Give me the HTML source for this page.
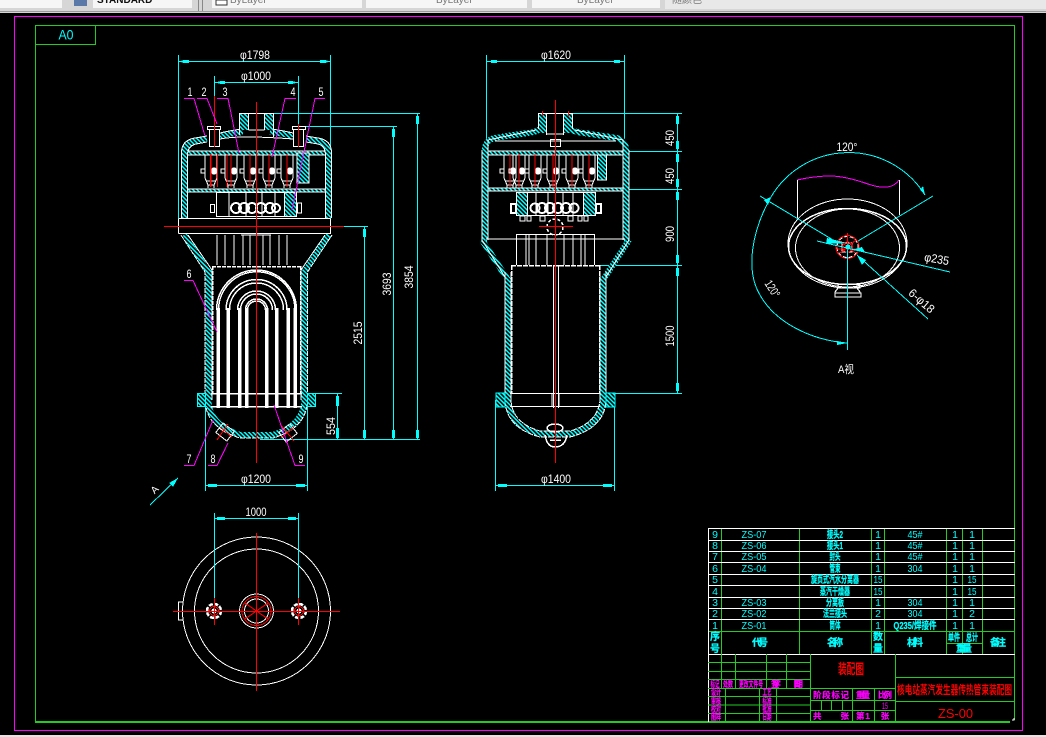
<!DOCTYPE html>
<html><head><meta charset="utf-8"><style>
html,body{margin:0;padding:0;background:#000;width:1046px;height:737px;overflow:hidden}
svg{display:block}
text{font-family:"Liberation Sans","Noto Sans CJK SC",sans-serif}
.w{fill:#fff;font-size:12px;text-anchor:middle}
.c{fill:#0ff;font-size:10.5px;text-anchor:middle}
.cb{fill:#0ff;stroke:#0ff;stroke-width:.25;font-size:10px;font-weight:bold;text-anchor:middle}
.m{fill:#f0f;stroke:#f0f;stroke-width:.2;font-size:8.5px;font-weight:bold;text-anchor:middle}
.r{fill:#f00;text-anchor:middle;font-weight:bold}
</style></head><body>
<svg width="1046" height="737" viewBox="0 0 1046 737" xmlns="http://www.w3.org/2000/svg" shape-rendering="crispEdges">
<defs>
<pattern id="h" width="3" height="3" patternUnits="userSpaceOnUse" patternTransform="rotate(45)"><rect width="3" height="3" fill="#000"/><rect width="3" height="1.3" fill="#0ff"/></pattern>
<g id="sep" fill="none" stroke="#fff" stroke-width="1">
<path d="M-6,155H6V178L3,185H-3L-6,178Z"/><path d="M-3,185V188M3,185V188M-5,181H5"/><circle cx="3" cy="171" r="3" fill="#fff"/><rect x="-10" y="169" width="4" height="4"/>
<path d="M0,154V187" stroke="#f00" stroke-width="1.2"/>
</g>
<g id="hole"><circle r="7" fill="none" stroke="#fff" stroke-width="2.5" stroke-dasharray="4 1.5"/><circle r="4.5" fill="none" stroke="#f00"/><circle r="2.5" fill="#fff"/></g>
</defs>
<rect width="1046" height="737" fill="#000"/>
<!-- toolbar -->
<rect width="1046" height="13" fill="#d6d6d6"/>
<rect y="11" width="1046" height="1" fill="#9a9a9a"/>
<g fill="#f6f6f6"><rect width="62" height="8"/><rect x="93" width="99" height="8"/><rect x="212" width="150" height="8"/><rect x="366" width="161" height="8"/><rect x="532" width="128" height="8"/><rect x="665" width="381" height="9" fill="#e8e8e8"/></g>
<rect x="74" y="0" width="13" height="6" fill="#5a78a8"/>
<rect x="198" y="0" width="1" height="11" fill="#888"/><rect x="202" y="0" width="1" height="11" fill="#888"/>
<rect x="216" y="0" width="11" height="5" fill="#fff" stroke="#333"/>
<g font-size="10" fill="#777"><text x="230" y="3">ByLayer</text><text x="436" y="3">ByLayer</text><text x="577" y="3">ByLayer</text><text x="672" y="3">随颜色</text></g>
<text x="97" y="3" font-size="10" font-weight="bold" fill="#111">STANDARD</text>
<rect y="735" width="1046" height="2" fill="#e4e4e4"/>
<rect x="14.5" y="16.5" width="1008" height="714" fill="none" stroke="#f0f"/>
<path d="M35.5,25.5H1014.5V720M35.5,25.5V722" fill="none" stroke="#2c2" stroke-width="1"/>
<rect x="35" y="721" width="975" height="2" fill="#2c2"/>
<rect x="35.5" y="25.5" width="60" height="19" fill="none" stroke="#2c2"/>
<text x="66" y="39.5" font-size="14" fill="#0ff" text-anchor="middle" textLength="15" lengthAdjust="spacingAndGlyphs">A0</text>

<!-- LEFT VIEW -->
<g fill="none">
<path d="M178.5,55V219M330.5,55V219M214.5,76V128M298.5,76V128M205.5,406V491M307.5,406V491" stroke="#0ff"/>
<path d="M179,61.5H330M215,82.5H298M206,485.5H307" stroke="#0ff"/>
<path d="M272,113.5H420M306,126.5H397M344,226.5H368M315,393.5H342M260,439.5H420M417.5,113V440M393.5,126V440M364.5,226V440M337.5,393V440" stroke="#0ff"/>
<path d="M150,505L178,478" stroke="#0ff"/>
<!-- hatched walls -->
<g stroke="url(#h)" stroke-width="6">
<path d="M184.5,218V153Q184.5,143 195,141L207,139M220,136Q232,133 243,132"/>
<path d="M328.5,218V153Q328.5,143 318,141L306,139M293,136Q281,133 270,132"/>
<path d="M184,235L208.5,272V400Q209,425 240,435H273Q304,425 304.5,400V272L329,235"/>
<path d="M188,153H325M188,190.5H325" stroke-width="4"/>
</g>
<g stroke="#fff">
<path d="M181.5,218V153Q181.5,140 195,138L207,136M220,133Q232,130 243,129M331.5,218V153Q331.5,140 318,138L306,136M293,133Q281,130 270,129"/>
<path d="M187.5,218V155Q187.5,146 196,144L207,142M220,139Q240,135 293,139M325.5,218V155Q325.5,146 318,144L306,142"/>
<path d="M178.5,218.5H330.5M178.5,233.5H330.5V219M178.5,219V233.5"/>
<path d="M188,151H325M188,155H325M188,189H325M188,192H325"/>
<path d="M181,235L205,272V400Q206,428 240,438H273Q307,428 307.5,400V272L332,235" stroke-dasharray="5 1"/>
<path d="M188,235L212,270V400M325,235L301,270V400"/>
<path d="M239.5,113.5H273.5V137M239.5,113V135M248.5,113V130M264.5,113V130M248.5,130H264.5"/>
<rect x="207.5" y="126.5" width="13" height="3"/><rect x="209.5" y="129.5" width="10" height="17"/>
<rect x="292.5" y="126.5" width="13" height="3"/><rect x="293.5" y="129.5" width="10" height="17"/>
</g>
<rect x="240" y="114" width="8" height="16" fill="url(#h)"/><rect x="265" y="114" width="8" height="16" fill="url(#h)"/>
<rect x="297" y="153" width="12" height="30" fill="url(#h)" stroke="#fff"/>
<rect x="284.5" y="192.5" width="12" height="24" fill="url(#h)" stroke="#fff"/>
<rect x="197.5" y="393.5" width="8" height="13" fill="url(#h)" stroke="#0ff"/><rect x="307.5" y="393.5" width="8" height="13" fill="url(#h)" stroke="#0ff"/>
</g>
<use href="#sep" x="211"/><use href="#sep" x="231"/><use href="#sep" x="250"/><use href="#sep" x="269"/><use href="#sep" x="287"/>
<path d="M217.5,154V187" stroke="#f00" fill="none"/>
<g fill="none" stroke="#fff">
<rect x="216.5" y="192.5" width="68" height="24"/>
<path d="M229,192V216M246,192V216M262,192V216M275,192V216"/>
<g stroke-width="2"><circle cx="236" cy="208" r="5"/><circle cx="244" cy="208" r="5"/><circle cx="252" cy="208" r="5"/><circle cx="261" cy="208" r="5"/><circle cx="270" cy="208" r="5"/><circle cx="276" cy="208" r="4"/></g>
<rect x="210.5" y="204.5" width="4" height="8"/><rect x="297.5" y="203" width="4" height="10"/>
<path d="M217,235V265M225,235V265M234,235V265M243,235V265M250,235V265M263,235V265M270,235V265M279,235V265M287,235V265M241,235H271"/>
<path d="M212,266.5H301M212.5,266V393M300.5,266V393" stroke-width="1.5" stroke-dasharray="4 1"/>
<g stroke-width="1.5">
<path d="M218.5,310A38,38 0 0 1 295,310"/><path d="M216.5,310A40,40 0 0 1 296.5,310" />
<path d="M226,310A30.5,30.5 0 0 1 287,310"/><path d="M229.5,310A27,27 0 0 1 283.5,310"/>
<path d="M237.5,310A19,19 0 0 1 275.5,310"/><path d="M240.5,310A16,16 0 0 1 272.5,310"/>
<path d="M245.5,310A11,11 0 0 1 267.5,310"/><path d="M247.5,310A9,9 0 0 1 265.5,310"/>
<path d="M211,393.5H302M211,406.5H302"/>
</g>
<path d="M218.4,408V308M228,408V308M239.7,408V308M246.7,408V308M266.7,408V308M276.7,408V308M288.3,408V308M295,408V308" stroke-width="3.5"/>
<rect x="-7" y="-6" width="14" height="12" transform="translate(225 432) rotate(38)"/>
<rect x="-7" y="-6" width="14" height="12" transform="translate(288 433) rotate(-38)"/>
<path d="M217,440L228,424M280,424L294,441M220,427L232,437M281,438L294,427" stroke="#f00"/>
</g>
<path d="M256.5,102V463M164,226.5H344" stroke="#f00" stroke-width="1.2" fill="none"/>
<path d="M214.5,96V147M298.5,124V147M210.5,154V187M227,154V187" stroke="#f00" fill="none"/>
<path d="M184,98.5H194L205,136M197,98.5H207L217,124M217,98.5H228L239,153M296,98.5H285L272,157M325,98.5H315L292,210M184,280.5H193L217,332M184,465.5H194L213,420M208,465.5H217L228,443M305,465.5H295L274,405M797,180Q815,176 830,176T868,184T899,180" stroke="#f0f" fill="none"/>
<g>
<text class="w" x="190" y="96" textLength="5" lengthAdjust="spacingAndGlyphs">1</text><text class="w" x="204" y="96" textLength="5" lengthAdjust="spacingAndGlyphs">2</text><text class="w" x="225" y="96" textLength="5" lengthAdjust="spacingAndGlyphs">3</text><text class="w" x="293" y="96" textLength="5" lengthAdjust="spacingAndGlyphs">4</text><text class="w" x="321" y="96" textLength="5" lengthAdjust="spacingAndGlyphs">5</text>
<text class="w" x="189" y="278" textLength="5" lengthAdjust="spacingAndGlyphs">6</text><text class="w" x="189" y="463" textLength="5" lengthAdjust="spacingAndGlyphs">7</text><text class="w" x="213" y="463" textLength="5" lengthAdjust="spacingAndGlyphs">8</text><text class="w" x="301" y="463" textLength="5" lengthAdjust="spacingAndGlyphs">9</text>
<text class="w" x="255" y="59" textLength="30" lengthAdjust="spacingAndGlyphs">φ1798</text>
<text class="w" x="256" y="80" textLength="30" lengthAdjust="spacingAndGlyphs">φ1000</text>
<text class="w" x="256" y="483" textLength="30" lengthAdjust="spacingAndGlyphs">φ1200</text>
<text class="w" transform="translate(335,426) rotate(-90)" textLength="18" lengthAdjust="spacingAndGlyphs">554</text>
<text class="w" transform="translate(362,333) rotate(-90)" textLength="23" lengthAdjust="spacingAndGlyphs">2515</text>
<text class="w" transform="translate(391,284) rotate(-90)" textLength="23" lengthAdjust="spacingAndGlyphs">3693</text>
<text class="w" transform="translate(413,277) rotate(-90)" textLength="23" lengthAdjust="spacingAndGlyphs">3854</text>
<text class="w" transform="translate(157,492) rotate(-45)" style="font-size:10px">A</text>
</g>
<g fill="#0ff">
<rect x="183" y="60" width="6" height="3"/><rect x="320" y="60" width="6" height="3"/><path d="M179,61.5L184,60V63Z M330,61.5L325,60V63Z"/>
<rect x="220" y="81" width="5" height="3"/><rect x="288" y="81" width="5" height="3"/><path d="M215,82.5L221,81V84ZM298,82.5L292,81V84Z"/>
<rect x="208" y="484" width="9" height="3"/><rect x="296" y="484" width="9" height="3"/>
<rect x="336" y="396" width="3" height="10"/><rect x="336" y="428" width="3" height="10"/>
<rect x="363" y="229" width="3" height="8"/><rect x="363" y="430" width="3" height="8"/>
<rect x="392" y="129" width="3" height="8"/><rect x="392" y="430" width="3" height="8"/>
<rect x="416" y="116" width="3" height="8"/><rect x="416" y="430" width="3" height="8"/>
<path d="M178,478L169,483L173,487Z"/>
</g>

<!-- CENTER VIEW -->
<g fill="none">
<path d="M486.5,55V242M624.5,55V242M495.5,400V491M614.5,400V491" stroke="#0ff"/>
<path d="M487,61.5H624M496,485.5H614" stroke="#0ff"/>
<path d="M572,113.5H682M628,151.5H682M628,189.5H682M600,265.5H682M615,393.5H682M677.5,113V394" stroke="#0ff"/>
<g stroke="url(#h)" stroke-width="6">
<path d="M485,240V150Q485,141 494,138L534,132Q541,130 544,124"/>
<path d="M626,240V150Q626,141 617,138L577,132Q570,130 567,124"/>
<path d="M482,240L508,280V400Q509,425 540,434H570Q602,425 603,400V280L629,240"/>
<path d="M488,153H623M488,189.5H623" stroke-width="4"/>
</g>
<rect x="538" y="114" width="8" height="19" fill="url(#h)"/><rect x="564" y="114" width="8" height="19" fill="url(#h)"/>
<g stroke="#fff">
<path d="M538.5,113.5H572.5M546.5,113V135M563.5,113V135M538.5,113V129M572.5,113V129"/>
<path d="M488,150V140L536,130M623,150V140L575,130M495,141H616M546,134H564"/>
<rect x="550.5" y="139.5" width="10" height="7"/>
<path d="M488,151H623M488,155H623M488,188H623M488,191H623"/>
<path d="M482,240V150M488,240V150M629,240V150M623,240V150M486,239H625M505,272V400M511,272V400M600,272V400M606,272V400"/>
<path d="M482,240L505,277M629,240L606,277"/>
<path d="M505,400Q506,428 540,437H570Q605,428 606,400M511,400Q512,423 540,431H570Q598,423 600,400" stroke-dasharray="6 1"/>
<path d="M516.5,234.5H594.5M516.5,234V265M594.5,234V265M526,234V265M529,234V265M536,234V265M547,234V265M564,234V265M573,234V265M581,234V265M585,234V265"/>
<path d="M511,265.5H600M511.5,265V393M599.5,265V393" stroke-width="1.5" stroke-dasharray="5 1"/>
<path d="M553.5,265V408M558.5,265V408M510,393.5H600M510,406.5H600M552,393V407M559,393V407" stroke-width="1"/>
<path d="M545,435Q547,447 555,447Q565,447 567,435M550,440H561" stroke-width="1.5"/>
<ellipse cx="555" cy="428" rx="8" ry="4" stroke-width="1.5"/>
<rect x="516.5" y="192.5" width="79" height="23"/>
<path d="M536,192V215M548,192V215M563,192V215M573,192V215"/>
<g stroke-width="2"><circle cx="535" cy="208" r="4.5"/><circle cx="542" cy="208" r="5"/><circle cx="550" cy="208" r="5"/><circle cx="558" cy="208" r="5"/><circle cx="566" cy="208" r="5"/><circle cx="574" cy="208" r="4.5"/></g>
<rect x="511" y="204" width="5" height="9" stroke-width="2"/><rect x="596" y="204" width="5" height="9" stroke-width="2"/>
<path d="M520,216h5v5h-5zM527,216h4v5h-4zM540,216h5v5h-5zM568,216h5v5h-5zM578,216h4v5h-4zM584,216h4v5h-4z"/>
<rect x="597.5" y="155" width="9" height="25" fill="url(#h)"/>
<rect x="516.5" y="192.5" width="11" height="23" fill="url(#h)"/><rect x="583.5" y="192.5" width="12" height="23" fill="url(#h)"/>
<circle cx="555" cy="227" r="8" stroke-width="1.5" stroke-dasharray="3 2"/>
</g>
<rect x="496" y="393" width="9" height="14" fill="url(#h)" stroke="#0ff"/><rect x="606" y="393" width="9" height="14" fill="url(#h)" stroke="#0ff"/>
</g>
<use href="#sep" x="510"/><use href="#sep" x="519"/><use href="#sep" x="535"/><use href="#sep" x="553"/><use href="#sep" x="572"/><use href="#sep" x="589"/>
<path d="M555.5,100V463M539,226.5H573M542.5,111V116M568.5,111V117" stroke="#f00" stroke-width="1.2" fill="none"/>
<text class="w" x="556" y="59" textLength="30" lengthAdjust="spacingAndGlyphs">φ1620</text>
<text class="w" x="556" y="483" textLength="30" lengthAdjust="spacingAndGlyphs">φ1400</text>
<text class="w" transform="translate(674,138) rotate(-90)" textLength="16" lengthAdjust="spacingAndGlyphs">450</text>
<text class="w" transform="translate(674,176) rotate(-90)" textLength="16" lengthAdjust="spacingAndGlyphs">450</text>
<text class="w" transform="translate(674,234) rotate(-90)" textLength="16" lengthAdjust="spacingAndGlyphs">900</text>
<text class="w" transform="translate(674,336) rotate(-90)" textLength="21" lengthAdjust="spacingAndGlyphs">1500</text>
<g fill="#0ff">
<rect x="491" y="60" width="6" height="3"/><rect x="614" y="60" width="6" height="3"/>
<rect x="498" y="484" width="9" height="3"/><rect x="603" y="484" width="9" height="3"/>
<rect x="676" y="116" width="3" height="8"/><rect x="676" y="141" width="3" height="8"/><rect x="676" y="154" width="3" height="8"/><rect x="676" y="179" width="3" height="8"/><rect x="676" y="192" width="3" height="8"/><rect x="676" y="255" width="3" height="8"/><rect x="676" y="268" width="3" height="8"/><rect x="676" y="383" width="3" height="8"/>
</g>

<!-- VIEW A -->
<g fill="none" stroke="#fff">
<path d="M797.5,180V218M899.5,180V215"/>
<ellipse cx="847.5" cy="243.5" rx="59.5" ry="44.5"/>
<ellipse cx="847.5" cy="246.5" rx="59" ry="38" stroke-width="1.5"/>
<ellipse cx="847.5" cy="248" rx="52" ry="39"/>
<path d="M838,285V288H860V285L857,285L855,284H841ZM835,292V296H860V292L857,288M838,288L835,292" stroke-width="1.2"/>
<circle cx="847.5" cy="247" r="11" stroke-width="2" stroke-dasharray="4 2"/>
<path d="M842,243h10v9h-10z"/>
</g>
<rect x="835" y="293" width="26" height="4" fill="#000" stroke="#fff"/>
<g fill="none" stroke="#f00">
<circle cx="847.5" cy="247" r="11.5"/><circle cx="847.5" cy="247" r="5"/>
<path d="M847.5,233V264M836,249H863M839,240L855,253M840,253L856,240" stroke-width="1"/>
</g>
<g fill="none" stroke="#0ff">
<path d="M771,197A90,90 0 0 1 925,195"/>
<path d="M771,197C752,230 745,270 760,295C775,322 810,340 847,343"/>
<path d="M760,196L838,243M933,196L858,241M847.5,250V350M817,241L950,272M857,255L928,319"/>
</g>
<g fill="#0ff"><path d="M771,197L768,205L764,200Z"/><path d="M925,195L920,190L923,186Z"/><path d="M847,343L837,341V345Z"/><path d="M847,243L827,238L826,244Z"/><path d="M852,250L865,252L862,247Z"/><path d="M857,255L862,265L866,260Z"/><circle cx="848" cy="247" r="2.5"/></g>
<text class="w" x="847" y="151" textLength="21" lengthAdjust="spacingAndGlyphs">120°</text>
<text class="w" transform="translate(769,291) rotate(57)" textLength="18" lengthAdjust="spacingAndGlyphs">120°</text>
<text class="w" transform="translate(936,263) rotate(10)" textLength="25" lengthAdjust="spacingAndGlyphs">φ235</text>
<text class="w" transform="translate(919,304) rotate(41)" textLength="30" lengthAdjust="spacingAndGlyphs">6-φ18</text>
<text class="w" x="846" y="373" textLength="16" lengthAdjust="spacingAndGlyphs" style="font-size:11px">A视</text>

<!-- BOTTOM VIEW -->
<g fill="none" stroke="#fff">
<circle cx="256.5" cy="611" r="74"/><circle cx="256.5" cy="611" r="62"/>
<circle cx="256.5" cy="611" r="17"/><circle cx="256.5" cy="611" r="12"/>
<path d="M183,602H178.5V620H183" stroke-width="1"/>
</g>
<circle cx="256.5" cy="611" r="14.5" fill="none" stroke="#f00" stroke-width="1"/>
<use href="#hole" x="214" y="611"/><use href="#hole" x="299" y="611"/>
<path d="M214.5,513V598M298.5,513V598M215,518.5H298" stroke="#0ff" fill="none"/>
<g fill="#0ff"><rect x="217" y="517" width="8" height="3"/><rect x="288" y="517" width="8" height="3"/><path d="M215,518.5L219,517V520ZM298,518.5L294,517V520Z"/></g>
<text class="w" x="256" y="516" textLength="21" lengthAdjust="spacingAndGlyphs">1000</text>
<path d="M256.5,533V691M173,611.5H340M214.5,598V625M298.5,598V625M245,603L268,619M245,619L268,603" stroke="#f00" stroke-width="1.1" fill="none"/>

<!-- TABLE -->
<g fill="none" stroke="#2c2">
<path d="M721.5,528V654M799.5,528V654M871.5,528V654M884.5,528V654M946.5,528V654M962.5,528V654M982.5,528V654M1014.5,528V720" stroke-width="1"/>
<path d="M708.5,631.5H1015M946.5,643.5H982"/>
</g>
<path d="M708.5,528V722" stroke="#fff" fill="none"/>
<path d="M708,528.5H1015M708,540.5H1015M708,551.5H1015M708,562.5H1015M708,574.5H1015M708,585.5H1015M708,597.5H1015M708,608.5H1015M708,619.5H1015M708,654.5H1015" stroke="#fff" fill="none"/>
<g fill="none" stroke="#2c2">
<path d="M721.5,654V688M735.5,654V688M766.5,654V688M786.5,654V688"/>
<path d="M708,662.5H810M708,671.5H810M708,679.5H810M708,688.5H895M708,696.5H810M708,705H810M708,713.5H810"/>
<path d="M725.5,688V721M759.5,688V721M776.5,688V721M810.5,654V721M895.5,654V721"/>
<path d="M810,700.5H895M810,710.5H895M852.5,688V721M874.5,688V721M821.5,700V711M831.5,700V711M842.5,700V711"/>
<path d="M895,677.5H1015M895,701.5H1015"/>
</g>
<path d="M1012,720h2v-2" stroke="#fff" fill="none"/>
<g>
<text class="c" x="715" y="538">9</text><text class="c" x="715" y="549">8</text><text class="c" x="715" y="560">7</text><text class="c" x="715" y="572">6</text><text class="c" x="715" y="583">5</text><text class="c" x="715" y="595">4</text><text class="c" x="715" y="606">3</text><text class="c" x="715" y="617">2</text><text class="c" x="715" y="629">1</text>
<text class="c" x="754" y="538" textLength="25" lengthAdjust="spacingAndGlyphs">ZS-07</text><text class="c" x="754" y="549" textLength="25" lengthAdjust="spacingAndGlyphs">ZS-06</text><text class="c" x="754" y="560" textLength="25" lengthAdjust="spacingAndGlyphs">ZS-05</text><text class="c" x="754" y="572" textLength="25" lengthAdjust="spacingAndGlyphs">ZS-04</text><text class="c" x="754" y="606" textLength="25" lengthAdjust="spacingAndGlyphs">ZS-03</text><text class="c" x="754" y="617" textLength="25" lengthAdjust="spacingAndGlyphs">ZS-02</text><text class="c" x="754" y="629" textLength="25" lengthAdjust="spacingAndGlyphs">ZS-01</text>
<text class="cb" x="835" y="538" textLength="16" lengthAdjust="spacingAndGlyphs">接头2</text><text class="cb" x="835" y="549" textLength="16" lengthAdjust="spacingAndGlyphs">接头1</text><text class="cb" x="835" y="560" textLength="11" lengthAdjust="spacingAndGlyphs">封头</text><text class="cb" x="835" y="572" textLength="11" lengthAdjust="spacingAndGlyphs">管束</text><text class="cb" x="835" y="583" textLength="48" lengthAdjust="spacingAndGlyphs">旋页式汽水分离器</text><text class="cb" x="835" y="595" textLength="30" lengthAdjust="spacingAndGlyphs">蒸汽干燥器</text><text class="cb" x="835" y="606" textLength="18" lengthAdjust="spacingAndGlyphs">分离板</text><text class="cb" x="835" y="617" textLength="24" lengthAdjust="spacingAndGlyphs">法兰接头</text><text class="cb" x="835" y="629" textLength="11" lengthAdjust="spacingAndGlyphs">筒体</text>
<text class="c" x="878" y="538">1</text><text class="c" x="878" y="549">1</text><text class="c" x="878" y="560">1</text><text class="c" x="878" y="572">1</text><text class="c" x="878" y="583" textLength="9" lengthAdjust="spacingAndGlyphs">15</text><text class="c" x="878" y="595" textLength="9" lengthAdjust="spacingAndGlyphs">15</text><text class="c" x="878" y="606">1</text><text class="c" x="878" y="617">2</text><text class="c" x="878" y="629">1</text>
<text class="c" x="915" y="538" textLength="15" lengthAdjust="spacingAndGlyphs">45#</text><text class="c" x="915" y="549" textLength="15" lengthAdjust="spacingAndGlyphs">45#</text><text class="c" x="915" y="560" textLength="15" lengthAdjust="spacingAndGlyphs">45#</text><text class="c" x="915" y="572" textLength="15" lengthAdjust="spacingAndGlyphs">304</text><text class="c" x="915" y="606" textLength="15" lengthAdjust="spacingAndGlyphs">304</text><text class="c" x="915" y="617" textLength="15" lengthAdjust="spacingAndGlyphs">304</text><text class="cb" x="915" y="629" textLength="43" lengthAdjust="spacingAndGlyphs">Q235/焊接件</text>
<text class="c" x="955" y="538">1</text><text class="c" x="955" y="549">1</text><text class="c" x="955" y="560">1</text><text class="c" x="955" y="572">1</text><text class="c" x="955" y="583">1</text><text class="c" x="955" y="595">1</text><text class="c" x="955" y="606">1</text><text class="c" x="955" y="617">1</text><text class="c" x="955" y="629">1</text>
<text class="c" x="972" y="538">1</text><text class="c" x="972" y="549">1</text><text class="c" x="972" y="560">1</text><text class="c" x="972" y="572">1</text><text class="c" x="972" y="583" textLength="9" lengthAdjust="spacingAndGlyphs">15</text><text class="c" x="972" y="595" textLength="9" lengthAdjust="spacingAndGlyphs">15</text><text class="c" x="972" y="606">1</text><text class="c" x="972" y="617">2</text><text class="c" x="972" y="629">1</text>
<text class="cb" x="715" y="640">序</text><text class="cb" x="715" y="652">号</text><text class="cb" x="760" y="646" textLength="16" lengthAdjust="spacing">代号</text><text class="cb" x="835" y="646" textLength="16" lengthAdjust="spacing">名称</text><text class="cb" x="878" y="640">数</text><text class="cb" x="878" y="652">量</text><text class="cb" x="915" y="646" textLength="16" lengthAdjust="spacing">材料</text><text class="cb" x="954" y="641" textLength="12" lengthAdjust="spacingAndGlyphs">单件</text><text class="cb" x="972" y="641" textLength="12" lengthAdjust="spacingAndGlyphs">总计</text><text class="cb" x="964" y="652" textLength="16" lengthAdjust="spacing">重量</text><text class="cb" x="998" y="646" textLength="16" lengthAdjust="spacing">备注</text>
</g>
<g>
<text class="m" x="715" y="687" textLength="9" lengthAdjust="spacingAndGlyphs">标记</text><text class="m" x="728" y="687" textLength="10" lengthAdjust="spacingAndGlyphs">处数</text><text class="m" x="751" y="687" textLength="24" lengthAdjust="spacingAndGlyphs">更改文件号</text><text class="m" x="776" y="687" textLength="10" lengthAdjust="spacing">签字</text><text class="m" x="798" y="687" textLength="10" lengthAdjust="spacing">日期</text>
<text class="m" x="716" y="695" textLength="10" lengthAdjust="spacingAndGlyphs">设计</text><text class="m" x="767" y="695" textLength="9" lengthAdjust="spacingAndGlyphs">工艺</text>
<text class="m" x="716" y="704" textLength="10" lengthAdjust="spacingAndGlyphs">审核</text><text class="m" x="767" y="704" textLength="9" lengthAdjust="spacingAndGlyphs">标准</text>
<text class="m" x="716" y="712" textLength="10" lengthAdjust="spacingAndGlyphs">校对</text><text class="m" x="767" y="712" textLength="9" lengthAdjust="spacingAndGlyphs">批准</text>
<text class="m" x="716" y="720" textLength="10" lengthAdjust="spacingAndGlyphs">图样</text><text class="m" x="767" y="720" textLength="9" lengthAdjust="spacingAndGlyphs">日期</text>
<text class="m" x="831" y="698" textLength="36" lengthAdjust="spacing">阶段标记</text><text class="m" x="863" y="698" textLength="14" lengthAdjust="spacing">重量</text><text class="m" x="885" y="698" textLength="14" lengthAdjust="spacing">比例</text>
<text x="885" y="709" font-size="9" fill="#f0f" text-anchor="middle" textLength="6" lengthAdjust="spacingAndGlyphs">15</text>
<text class="m" x="831" y="719" textLength="36" lengthAdjust="spacing">共 张</text><text class="m" x="863" y="719" textLength="14" lengthAdjust="spacing">第 1</text><text class="m" x="885" y="719">张</text>
</g>
<text class="r" x="851" y="674" font-size="14" textLength="26" lengthAdjust="spacingAndGlyphs">装配图</text>
<text class="r" x="954.5" y="694" font-size="12" textLength="115" lengthAdjust="spacingAndGlyphs">核电站蒸汽发生器传热管束装配图</text>
<text x="955.5" y="718" font-size="13" fill="#f00" text-anchor="middle" textLength="35" lengthAdjust="spacingAndGlyphs">ZS-00</text>
</svg>
</body></html>
